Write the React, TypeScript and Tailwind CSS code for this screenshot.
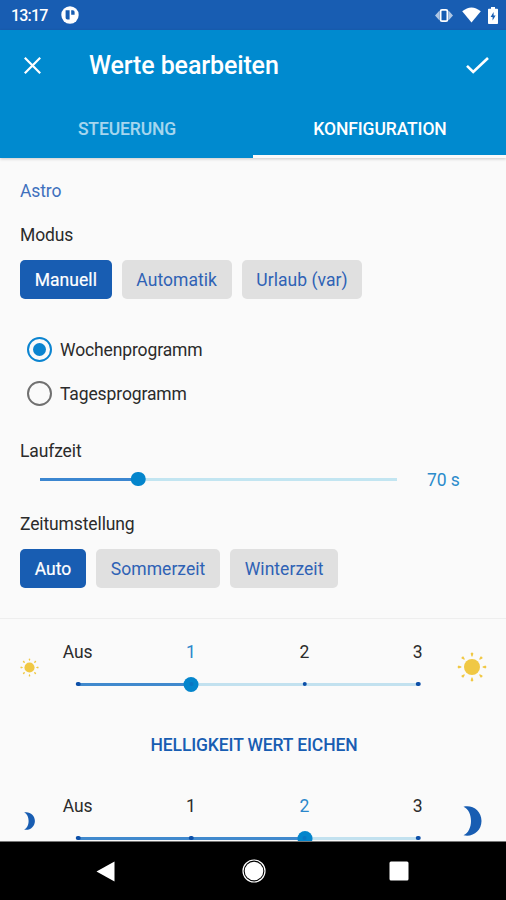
import { useState } from 'react';
import clsx from 'clsx';

const modes = ['Manuell', 'Automatik', 'Urlaub (var)'];
const programs = ['Wochenprogramm', 'Tagesprogramm'];
const clockChanges = ['Auto', 'Sommerzeit', 'Winterzeit'];
const levels = ['Aus', '1', '2', '3'];

function StatusBar() {
  return (
    <div className="flex h-[30px] shrink-0 items-center bg-[#185db2] pl-[11px] pr-[8px] text-white">
      <span className="w-[37px] whitespace-nowrap pt-[2px] text-[16px] font-medium leading-5 tracking-[-0.8px]">13:17</span>
      <svg className="ml-[13px] h-[18px] w-[18px]" viewBox="0 0 18 18">
        <circle cx="9" cy="9" r="8.7" fill="currentColor" />
        <path d="M4.6 4.2h4v9.4h-2.2q-1.8 0-1.8-1.8z" fill="#185db2" />
        <path d="M10.2 4.2h1.6q1.8 0 1.8 1.8v2.8h-3.4z" fill="#185db2" />
      </svg>
      <div className="ml-auto flex items-center">
        <svg className="h-[15px] w-[18px]" viewBox="0 0 18 15">
          <path d="M4.5 2.5v10L0 7.5zM13.5 2.5v10L18 7.5z" fill="currentColor" opacity="0.65" />
          <rect x="5.6" y="1.9" width="6.8" height="11.2" rx="1.4" fill="none" stroke="currentColor" strokeWidth="1.8" />
        </svg>
        <svg className="ml-[9px] h-[16px] w-[19px]" viewBox="0 0 19 16">
          <path d="M9.5 15.6.2 4.2Q9.5-3.4 18.8 4.2z" fill="currentColor" />
        </svg>
        <svg className="ml-[7px] h-[17px] w-[10px]" viewBox="0 0 10 17">
          <path d="M3 0h4v1.8h2.2q.8 0 .8.8v13.6q0 .8-.8.8H.8q-.8 0-.8-.8V2.6q0-.8.8-.8H3z" fill="currentColor" />
          <path d="M5.6 5 2.6 10h2v3.5l3-5h-2z" fill="#185db2" />
        </svg>
      </div>
    </div>
  );
}

function Chips({ options, value, onChange }: { options: string[]; value: string; onChange: (v: string) => void }) {
  return (
    <div className="mt-[15.5px] flex gap-[10px]">
      {options.map((option) => (
        <button
          key={option}
          onClick={() => onChange(option)}
          className={clsx(
            'h-[39px] whitespace-nowrap rounded-[5px] px-[14.7px] text-[17.5px] leading-5 tracking-[0.05px]',
            option === value ? 'bg-[#185db2] text-white [-webkit-text-stroke:0.2px_white]' : 'bg-[#e0e0e0] text-[#2f62b5]'
          )}
        >
          {option}
        </button>
      ))}
    </div>
  );
}

function LevelSlider({ value, onChange }: { value: number; onChange: (v: number) => void }) {
  return (
    <div className="w-[340px]">
      <div className="-ml-[57px] grid w-[453.3px] grid-cols-4">
        {levels.map((level, index) => (
          <button
            key={level}
            onClick={() => onChange(index)}
            className={clsx('text-center leading-5', index === value ? 'text-[#2b87cb]' : 'text-[#2b2b2b]')}
          >
            {level}
          </button>
        ))}
      </div>
      <div className="relative mt-3 flex h-5 items-center">
        <div className="h-[3px] bg-[#4089cd]" style={{ width: `${(value / 3) * 100}%` }} />
        <div className="h-[3px] flex-1 bg-[#c2e1ef]" />
        {levels.map((level, index) => (
          <span
            key={level}
            className="absolute h-[4.5px] w-[4.5px] -translate-x-1/2 rounded-full bg-[#0c4fa8]"
            style={{ left: `${(index / 3) * 100}%` }}
          />
        ))}
        <span
          className="absolute flex h-[15px] w-[15px] -translate-x-1/2 items-center justify-center rounded-full bg-[#0485cc]"
          style={{ left: `${(value / 3) * 100}%` }}
        >
          <span className="h-1 w-1 rounded-full bg-[#0a76c2]" />
        </span>
      </div>
    </div>
  );
}

function Sun({ className }: { className: string }) {
  return (
    <svg className={className} viewBox="0 0 30 30" fill="#f0c844">
      <circle cx="15" cy="15" r="8" />
      {[0, 45, 90, 135, 180, 225, 270, 315].map((angle) => (
        <path key={angle} d="M13.6 1.6q1.4-2 2.8 0L15.5 4.4h-1z" transform={`rotate(${angle} 15 15)`} />
      ))}
    </svg>
  );
}

function Moon({ className }: { className: string }) {
  return (
    <svg className={className} viewBox="0 0 18 30">
      <path d="M0 .8C9-1.5 18 5 18 15S9 31.5 0 29.2C10 25 10 5 0 .8z" fill="#185db2" />
    </svg>
  );
}

export default function App() {
  const [tab, setTab] = useState('KONFIGURATION');
  const [mode, setMode] = useState('Manuell');
  const [program, setProgram] = useState('Wochenprogramm');
  const [clockChange, setClockChange] = useState('Auto');
  const [brightness, setBrightness] = useState(1);
  const [darkness, setDarkness] = useState(2);

  return (
    <div className="flex h-[900px] w-[506px] flex-col overflow-hidden bg-[#fafafa] font-[Roboto,sans-serif] text-[17.5px] leading-5 tracking-[-0.12px] text-[#2b2b2b]">
      <StatusBar />

      {/* App bar */}
      <header className="z-10 shrink-0 bg-[#008acf] text-white shadow-[0_1px_3px_rgba(0,0,0,0.2)]">
        <div className="flex h-[72px] items-center pl-[24px] pr-[17px]">
          <svg className="mb-[2px] h-[17px] w-[17px]" viewBox="0 0 17 17" fill="none" stroke="currentColor" strokeWidth="2.2">
            <path d="m.8.8 15.4 15.4M16.2.8.8 16.2" />
          </svg>
          <h1 className="ml-[48px] text-[25px] font-medium leading-8">Werte bearbeiten</h1>
          <svg className="mb-[2px] ml-auto h-[17px] w-[23px]" viewBox="0 0 23 17" fill="none" stroke="currentColor" strokeWidth="2.6">
            <path d="m1 8.8 6.2 6.2L22 1" />
          </svg>
        </div>
        <div className="grid h-[56px] grid-cols-2">
          {['STEUERUNG', 'KONFIGURATION'].map((name) => (
            <button
              key={name}
              onClick={() => setTab(name)}
              className={clsx(
                'border-b-[3px] pl-[1px] pt-[1px] font-medium leading-5',
                tab === name ? 'border-[#fafafa]' : 'border-transparent text-white/65'
              )}
            >
              {name}
            </button>
          ))}
        </div>
      </header>

      <main className="min-h-0 flex-1 overflow-hidden">
        <section className="px-5 pt-[22.5px]">
          <h2 className="text-[#3f70bd]">Astro</h2>

          <h3 className="mt-6">Modus</h3>
          <Chips options={modes} value={mode} onChange={setMode} />

          <div className="mt-7 pl-[7px]">
            {programs.map((name) => (
              <button key={name} onClick={() => setProgram(name)} className="flex h-[44px] items-center">
                <span
                  className={clsx(
                    'flex h-[25px] w-[25px] items-center justify-center rounded-full border-[2.5px]',
                    program === name ? 'border-[#0b84d0]' : 'border-[#707070]'
                  )}
                >
                  {program === name && <span className="h-[13px] w-[13px] rounded-full bg-[#0b84d0]" />}
                </span>
                <span className="ml-[8px] pt-[1px]">{name}</span>
              </button>
            ))}
          </div>

          <h3 className="mt-[26px]">Laufzeit</h3>
          <div className="mt-[8px] flex h-5 items-center pl-5">
            <div className="relative flex w-[357px] items-center">
              <div className="h-[3px] w-[98px] bg-[#3b86d0]" />
              <div className="h-[3px] flex-1 bg-[#c2e5f1]" />
              <span className="absolute left-[98px] h-[14.5px] w-[14.5px] -translate-x-1/2 rounded-full bg-[#0485cc]" />
            </div>
            <span className="ml-[30px] pt-[2px] text-[#2b8bcb]">70 s</span>
          </div>

          <h3 className="mt-[24.5px]">Zeitumstellung</h3>
          <Chips options={clockChanges} value={clockChange} onChange={setClockChange} />
        </section>

        <section className="mt-[30px] border-t border-[#eeeeee] pt-[23px]">
          <div className="flex pl-5 pr-[19px]">
            <Sun className="mt-[16px] h-[19px] w-[19px]" />
            <div className="ml-[39px]">
              <LevelSlider value={brightness} onChange={setBrightness} />
            </div>
            <Sun className="ml-auto mt-[10px] h-[30px] w-[30px]" />
          </div>

          <button className="mx-auto mt-[41px] block pl-[2px] font-medium leading-5 text-[#185db2]">
            HELLIGKEIT WERT EICHEN
          </button>

          <div className="mt-[41px] flex pl-[24px] pr-[24px]">
            <Moon className="mt-[16px] h-[18px] w-[11px]" />
            <div className="ml-[43px]">
              <LevelSlider value={darkness} onChange={setDarkness} />
            </div>
            <Moon className="ml-auto mt-[10px] h-[30px] w-[19px]" />
          </div>
        </section>
      </main>

      {/* System navigation */}
      <nav className="z-10 flex h-[59px] shrink-0 items-center border-t border-[#777777] bg-black pl-[96px] text-white">
        <svg className="h-[21px] w-[19px]" viewBox="0 0 19 21">
          <path d="M18.5.5v20L.5 10.5z" fill="currentColor" />
        </svg>
        <svg className="ml-[127px] h-[24px] w-[24px]" viewBox="0 0 24 24">
          <circle cx="12" cy="12" r="9.3" fill="currentColor" />
          <circle cx="12" cy="12" r="11" fill="none" stroke="currentColor" strokeWidth="1.2" />
        </svg>
        <svg className="ml-[123px] h-[20px] w-[20px]" viewBox="0 0 20 20">
          <rect x=".5" y=".5" width="19" height="19" rx="1.5" fill="currentColor" />
        </svg>
      </nav>
    </div>
  );
}
